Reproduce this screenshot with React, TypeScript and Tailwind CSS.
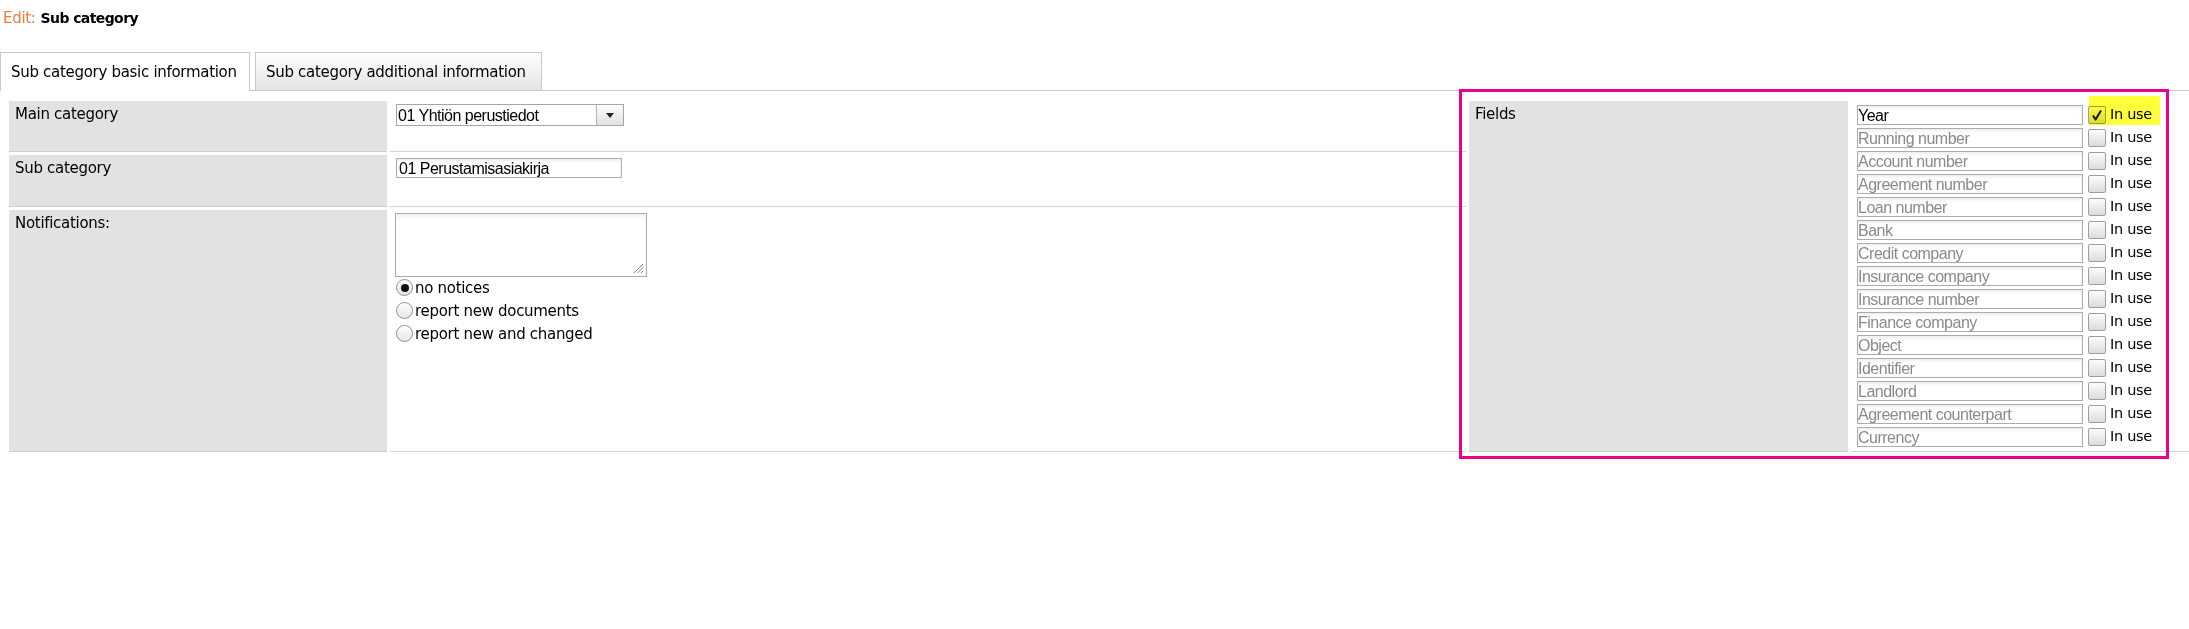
import React from 'react';

const fields = [
  'Year',
  'Running number',
  'Account number',
  'Agreement number',
  'Loan number',
  'Bank',
  'Credit company',
  'Insurance company',
  'Insurance number',
  'Finance company',
  'Object',
  'Identifier',
  'Landlord',
  'Agreement counterpart',
  'Currency',
];

const Checkbox = ({ checked }: { checked?: boolean }) => (
  <span className="mt-[1px] ml-[5px] flex h-[18px] w-[18px] shrink-0 items-center justify-center rounded-[2px] border border-[#9e9e9e] bg-linear-to-b from-[#fcfcfc] to-[#dcdcdc]">
    {checked && (
      <svg width="14" height="14" viewBox="0 0 14 14">
        <path d="M3 7.5 L5.6 11.5 L11 2.5" fill="none" stroke="#111" strokeWidth="2" strokeLinejoin="round" />
      </svg>
    )}
  </span>
);

const Radio = ({ checked, label }: { checked?: boolean; label: string }) => (
  <div className="flex h-[23px] items-center">
    <span className="flex h-[17px] w-[17px] items-center justify-center rounded-full border border-[#8f8f8f] bg-linear-to-b from-white to-[#e6e6e6]">
      {checked && <span className="h-[8px] w-[8px] rounded-full bg-[#111]" />}
    </span>
    <span className="ml-[2px]">{label}</span>
  </div>
);

const FieldRow = ({ name, index }: { name: string; index: number }) => (
  <div className="flex h-[20px] items-start">
    <input
      readOnly
      value={index === 0 ? name : ''}
      placeholder={name}
      className="h-[20px] w-[226px] border border-[#acacac] bg-white pl-0 pt-[1px] font-['Liberation_Sans',Arial,sans-serif] text-[16px] tracking-[-0.5px] text-black shadow-[inset_0_2px_3px_rgba(0,0,0,0.07)] outline-none placeholder:text-[#8c8a88]"
    />
    <Checkbox checked={index === 0} />
    <span className="-mt-[0.5px] ml-[4px] text-[14.5px]">In use</span>
  </div>
);

export default function App() {
  return (
    <div className="relative h-[629px] w-[2189px] overflow-hidden bg-white font-['DejaVu_Sans',sans-serif] text-[15px] leading-[18px] tracking-[-0.3px] text-black">
      {/* heading */}
      <div className="flex h-[52px] items-baseline pl-[3px] pt-[9px]">
        <span className="text-[#ef7d38]">Edit:</span>
        <span className="ml-[5px] text-[14px] font-bold tracking-[-0.6px]">Sub category</span>
      </div>

      {/* tabs */}
      <div className="flex items-end border-b border-[#c9c9c9]">
        <div className="-mb-px h-[39px] w-[250px] border border-b-0 border-[#c9c9c9] bg-white px-[10px] pt-[10px]">
          Sub category basic information
        </div>
        <div className="ml-[5px] h-[38px] w-[287px] border border-b-0 border-[#c9c9c9] bg-linear-to-b from-white to-[#e4e4e4] px-[10px] pt-[10px]">
          Sub category additional information
        </div>
      </div>

      {/* form */}
      <div className="flex gap-[3px] pl-[9px] pt-[10px]">
        <div className="flex w-[1457px] flex-col gap-[3px]">
          <div className="flex h-[51px] gap-[3px]">
            <div className="w-[378px] border-b border-[#cdcdcd] bg-[#e2e2e0] px-[6px] pt-[4px]">Main category</div>
            <div className="flex-1 border-b border-[#d3d3d3] pl-[6px] pt-[3px]">
              <div className="flex h-[22px] w-[228px] border border-[#a5a5a5] bg-white font-['Liberation_Sans',Arial,sans-serif] text-[16px] tracking-[-0.5px]">
                <span className="flex-1 pl-[1px] leading-[21px]">01 Yhtiön perustiedot</span>
                <span className="flex w-[27px] items-center justify-center border-l border-[#b3b3b3] bg-linear-to-b from-[#fdfdfd] to-[#e2e2e2]">
                  <svg width="8" height="5" viewBox="0 0 8 5">
                    <path d="M0 0 H8 L4 5 Z" fill="#222" />
                  </svg>
                </span>
              </div>
            </div>
          </div>

          <div className="flex h-[52px] gap-[3px]">
            <div className="w-[378px] border-b border-[#cdcdcd] bg-[#e2e2e0] px-[6px] pt-[4px]">Sub category</div>
            <div className="flex-1 border-b border-[#d3d3d3] pl-[6px] pt-[3px]">
              <input
                readOnly
                value="01 Perustamisasiakirja"
                className="h-[20px] w-[226px] border border-[#acacac] bg-white pl-[2px] pt-[1px] font-['Liberation_Sans',Arial,sans-serif] text-[16px] tracking-[-0.5px] text-black shadow-[inset_0_2px_3px_rgba(0,0,0,0.07)] outline-none"
              />
            </div>
          </div>

          <div className="flex flex-1 gap-[3px]">
            <div className="w-[378px] border-b border-[#cdcdcd] bg-[#e2e2e0] px-[6px] pt-[4px]">Notifications:</div>
            <div className="flex-1 border-b border-[#d3d3d3] pl-[5px] pt-[3px]">
              <div className="relative h-[64px] w-[252px] border border-[#acacac] bg-white shadow-[inset_0_3px_4px_rgba(0,0,0,0.06)]">
                <svg className="absolute right-[2px] bottom-[2px]" width="11" height="11" viewBox="0 0 11 11">
                  <path d="M10 1 L1 10 M10 4.5 L4.5 10 M10 8 L8 10" stroke="#8a8a8a" strokeWidth="1" />
                </svg>
              </div>
              <div className="-mt-[1px] pl-[1px]">
                <Radio checked label="no notices" />
                <Radio label="report new documents" />
                <Radio label="report new and changed" />
              </div>
            </div>
          </div>
        </div>

        <div className="w-[379px] border-b border-[#cdcdcd] bg-[#e2e2e0] px-[6px] pt-[4px]">Fields</div>
        <div className="flex w-[338px] flex-col gap-[3px] border-b border-[#d3d3d3] pb-[4px] pl-[6px] pt-[4px]">
          {fields.map((f, i) => (
            <FieldRow key={f} name={f} index={i} />
          ))}
        </div>
      </div>

      {/* annotations over the page */}
      <div className="pointer-events-none absolute top-[96px] left-[2089px] h-[29px] w-[71px] bg-[#ffff3c] mix-blend-multiply" />
      <div className="pointer-events-none absolute top-[89px] left-[1459px] h-[370px] w-[710px] border-[3px] border-[#ec008c]" />
    </div>
  );
}
